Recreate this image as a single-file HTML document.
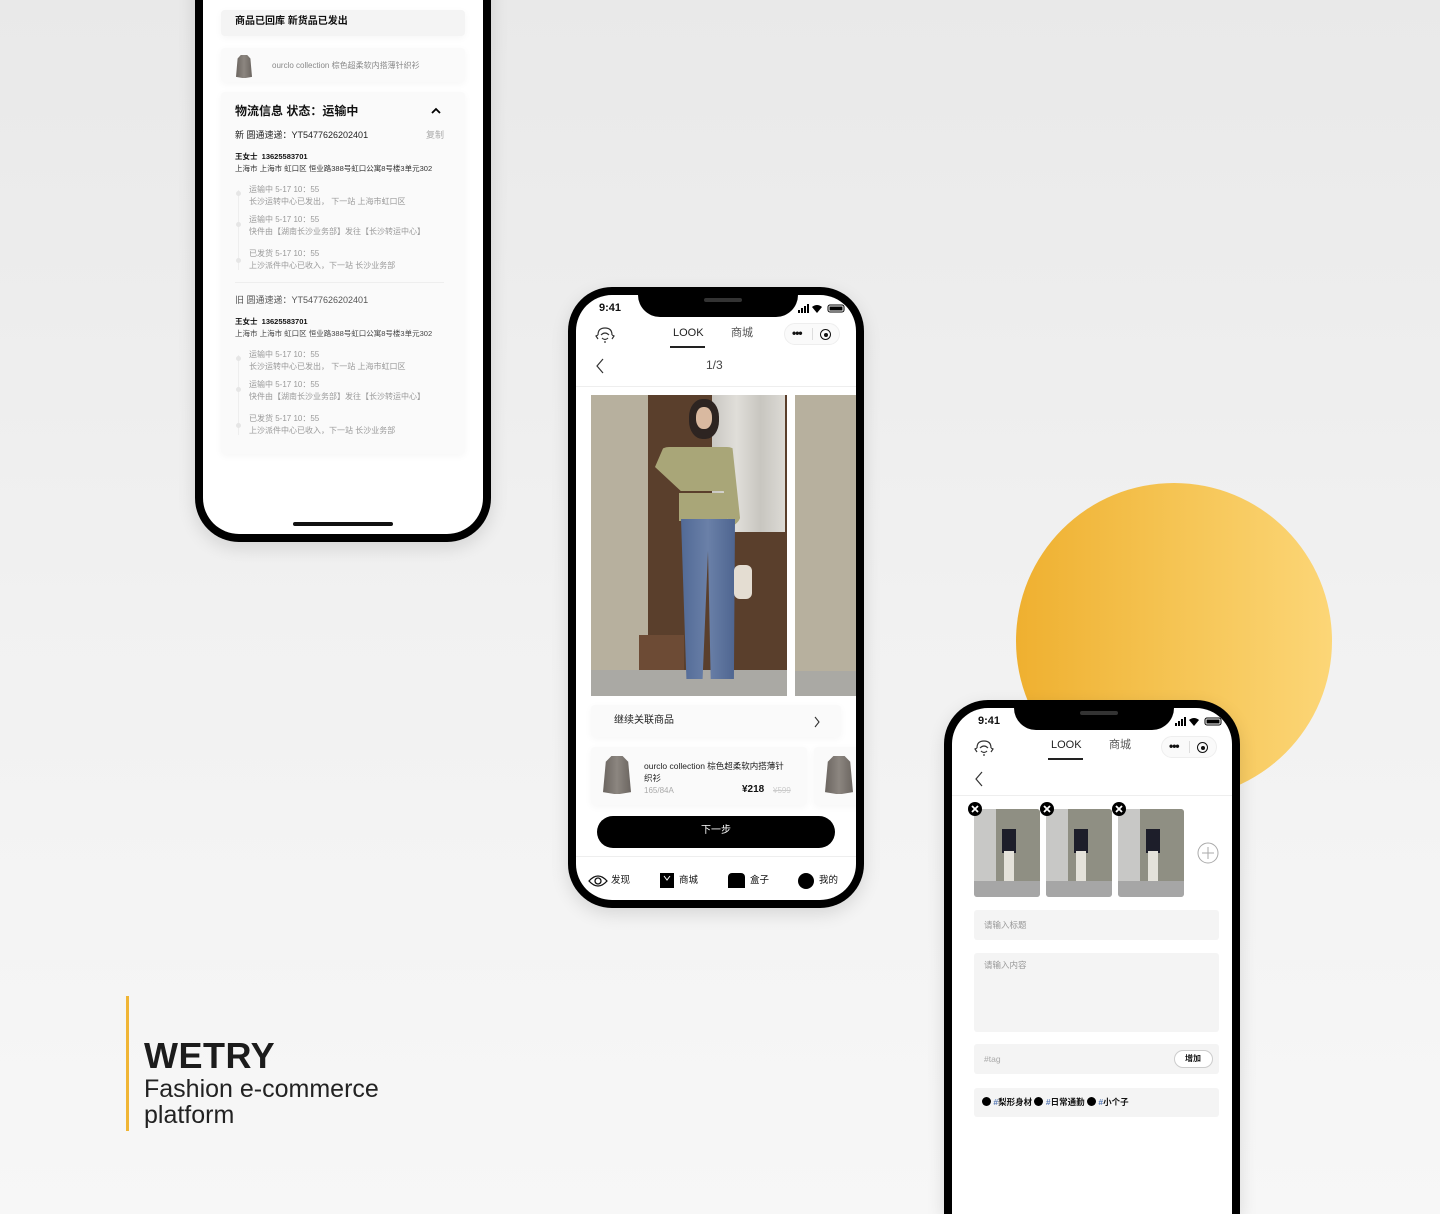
<!DOCTYPE html>
<html style="width:1440px;height:1214px;overflow:hidden"><head><meta charset="utf-8">
<style>
*{margin:0;padding:0;box-sizing:border-box}
body{width:1440px;height:1214px;overflow:hidden;position:relative;background:linear-gradient(180deg,#e9e9e9 0%,#f1f1f1 50%,#f7f7f7 100%);font-family:"Liberation Sans","Noto Sans CJK SC",sans-serif;color:#111}
.a{position:absolute}
.phone{position:absolute;background:#000;border-radius:44px;box-shadow:0 6px 18px rgba(0,0,0,.12)}
.scr{position:absolute;left:8px;top:8px;right:8px;bottom:8px;background:#fff;border-radius:36px;overflow:hidden}
.card{position:absolute;background:#fafafa;border-radius:4px;box-shadow:0 2px 8px rgba(0,0,0,.04)}
.t{position:absolute;white-space:nowrap;line-height:1.2}
.g{color:#9a9a9a}
.notch{position:absolute;background:#000;border-radius:0 0 22px 22px}
.coat{position:absolute;width:22px;height:30px;background:linear-gradient(90deg,#6b6560,#8c8680 50%,#6b6560);clip-path:polygon(30% 0,70% 0,90% 15%,100% 95%,60% 100%,40% 100%,0 95%,10% 15%)}
.dot{position:absolute;width:5px;height:5px;border-radius:50%;background:#e6e6e6}
</style></head><body>

<div class="a" style="left:1016px;top:483px;width:316px;height:316px;border-radius:50%;background:linear-gradient(90deg,#efb030 0%,#f5c453 50%,#fcd677 100%)"></div>

<!-- Phone 1 -->
<div class="phone" style="left:195px;top:-60px;width:296px;height:602px"></div>
<div class="a" style="left:203px;top:0;width:280px;height:534px;overflow:hidden;border-radius:0 0 36px 36px;background:#fff">
 <div class="card" style="left:18px;top:10px;width:244px;height:26px;background:#f4f4f4"></div>
 <div class="t" style="left:32px;top:16px;font-size:10px;font-weight:bold">商品已回库 新货品已发出</div>
 <div class="card" style="left:18px;top:48px;width:244px;height:34px"></div>
 <div class="coat" style="left:33px;top:55px;width:16px;height:23px"></div>
 <div class="t g" style="left:69px;top:61px;font-size:8px;color:#888">ourclo collection 棕色超柔软内搭薄针织衫</div>
 <div class="card" style="left:18px;top:92px;width:244px;height:362px"></div>
 <div class="t" style="left:32px;top:104px;font-size:12px;font-weight:bold">物流信息 状态：运输中</div>
 <svg class="a" style="left:227px;top:106px" width="12" height="10"><path d="M2 7 L6 3 L10 7" stroke="#000" stroke-width="1.8" fill="none"/></svg>
 <div class="t" style="left:32px;top:130px;font-size:9px;color:#222">新 圆通速递：YT5477626202401</div>
 <div class="t g" style="left:223px;top:130px;font-size:9px;color:#aaa">复制</div>
 <div class="t" style="left:32px;top:152px;font-size:7.5px;font-weight:bold">王女士&nbsp;&nbsp;13625583701</div>
 <div class="t" style="left:32px;top:164px;font-size:7.5px;color:#333">上海市 上海市 虹口区 恒业路388号虹口公寓8号楼3单元302</div>
 <div class="a" style="left:35px;top:190px;width:1px;height:80px;background:#eee"></div>
 <div class="dot" style="left:33px;top:191px"></div><div class="dot" style="left:33px;top:222px"></div><div class="dot" style="left:33px;top:258px"></div>
 <div class="t g" style="left:46px;top:184px;font-size:8px;line-height:12px">运输中 5-17 10：55<br>长沙运转中心已发出， 下一站 上海市虹口区</div>
 <div class="t g" style="left:46px;top:214px;font-size:8px;line-height:12px">运输中 5-17 10：55<br>快件由【湖南长沙业务部】发往【长沙转运中心】</div>
 <div class="t g" style="left:46px;top:248px;font-size:8px;line-height:12px">已发货 5-17 10：55<br>上沙派件中心已收入，下一站 长沙业务部</div>
 <div class="a" style="left:32px;top:282px;width:209px;height:1px;background:#eee"></div>
 <div class="t" style="left:32px;top:295px;font-size:9px;color:#555">旧 圆通速递：YT5477626202401</div>
 <div class="t" style="left:32px;top:317px;font-size:7.5px;font-weight:bold">王女士&nbsp;&nbsp;13625583701</div>
 <div class="t" style="left:32px;top:329px;font-size:7.5px;color:#444">上海市 上海市 虹口区 恒业路388号虹口公寓8号楼3单元302</div>
 <div class="a" style="left:35px;top:355px;width:1px;height:80px;background:#eee"></div>
 <div class="dot" style="left:33px;top:356px"></div><div class="dot" style="left:33px;top:387px"></div><div class="dot" style="left:33px;top:423px"></div>
 <div class="t g" style="left:46px;top:349px;font-size:8px;line-height:12px">运输中 5-17 10：55<br>长沙运转中心已发出， 下一站 上海市虹口区</div>
 <div class="t g" style="left:46px;top:379px;font-size:8px;line-height:12px">运输中 5-17 10：55<br>快件由【湖南长沙业务部】发往【长沙转运中心】</div>
 <div class="t g" style="left:46px;top:413px;font-size:8px;line-height:12px">已发货 5-17 10：55<br>上沙派件中心已收入，下一站 长沙业务部</div>
 <div class="a" style="left:90px;top:522px;width:100px;height:4px;border-radius:2px;background:#111"></div>
</div>

<!-- Phone 2 -->
<div class="phone" style="left:568px;top:287px;width:296px;height:621px">
 <div class="scr">
  <div class="notch" style="left:62px;top:-2px;width:160px;height:24px"></div>
  <div class="a" style="left:128px;top:3px;width:38px;height:4px;border-radius:2px;background:#333"></div>
  <div class="t" style="left:23px;top:7px;font-size:11px;font-weight:bold">9:41</div>
  <svg class="a" style="left:222px;top:9px" width="50" height="10"><rect x="0" y="6" width="2" height="3" fill="#000"/><rect x="3" y="4" width="2" height="5"/><rect x="6" y="2" width="2" height="7"/><rect x="9" y="0" width="2" height="9"/><path d="M14 3 Q19 -1 24 3 L19 9Z" fill="#000"/><rect x="30" y="1" width="16" height="7" rx="2" fill="none" stroke="#000"/><rect x="31.5" y="2.5" width="13" height="4" fill="#000"/></svg>
  <svg class="a" style="left:19px;top:31px" width="20" height="18"><path d="M3 9 Q3 2 10 2 Q17 2 17 9 M3 9 L1 10 L3 13 M17 9 L19 10 L17 13 M6 9 Q10 5 14 9 M7 12 Q10 15 13 12 M10 15 L10 17" stroke="#333" stroke-width="1.2" fill="none"/></svg>
  <div class="t" style="left:97px;top:32px;font-size:11px;color:#222">LOOK</div>
  <div class="a" style="left:94px;top:51px;width:35px;height:2px;background:#222"></div>
  <div class="t" style="left:155px;top:32px;font-size:11px;color:#555">商城</div>
  <div class="a" style="left:208px;top:28px;width:56px;height:22px;border-radius:11px;border:1px solid #eee;background:#fafafa"></div>
  <div class="t" style="left:216px;top:31px;font-size:12px;font-weight:bold;letter-spacing:-1px">•••</div>
  <div class="a" style="left:236px;top:33px;width:1px;height:12px;background:#ddd"></div>
  <div class="a" style="left:244px;top:34px;width:11px;height:11px;border-radius:50%;border:1.5px solid #111"></div>
  <div class="a" style="left:247.5px;top:37.5px;width:4px;height:4px;border-radius:50%;background:#111"></div>
  <svg class="a" style="left:19px;top:63px" width="10" height="16"><path d="M8 1 L2 8 L8 15" stroke="#333" stroke-width="1.2" fill="none"/></svg>
  <div class="t" style="left:130px;top:63px;font-size:12px;color:#444">1/3</div>
  <div class="a" style="left:0;top:91px;width:280px;height:1px;background:#eee"></div>
  <div class="a" style="left:15px;top:100px;width:196px;height:301px;background:#b7b09e;overflow:hidden">
   <div class="a" style="left:57px;top:0;width:139px;height:280px;background:#5a3f2c"></div>
   <div class="a" style="left:121px;top:0;width:73px;height:137px;background:linear-gradient(90deg,#c9c7c2,#e0ded9,#c8c6c0,#dcdad5)"></div>
   <div class="a" style="left:48px;top:240px;width:45px;height:45px;background:#6d4b35"></div>
   <div class="a" style="left:0;top:275px;width:196px;height:26px;background:#aaa9a4"></div>
   <div class="a" style="left:98px;top:4px;width:30px;height:40px;border-radius:45%;background:#2d2421"></div>
   <div class="a" style="left:105px;top:12px;width:16px;height:22px;border-radius:45%;background:#d9b9a0"></div>
   <div class="a" style="left:64px;top:52px;width:86px;height:80px;border-radius:14px;background:#a9a678;clip-path:polygon(10% 0,90% 0,100% 100%,85% 100%,80% 55%,30% 55%,0 25%)"></div>
   <div class="a" style="left:88px;top:98px;width:48px;height:28px;background:#a9a678"></div>
   <div class="a" style="left:90px;top:124px;width:54px;height:160px;background:linear-gradient(90deg,#526a96,#6a80a8,#4e6590);clip-path:polygon(0 0,100% 0,98% 100%,55% 100%,50% 20%,40% 100%,10% 100%)"></div>
   <div class="a" style="left:143px;top:170px;width:18px;height:34px;border-radius:6px;background:#e4ddd2"></div>
  </div>
  <div class="a" style="left:219px;top:100px;width:61px;height:301px;background:#b7b09e"></div>
  <div class="a" style="left:219px;top:376px;width:61px;height:25px;background:#aaa9a4"></div>
  <div class="card" style="left:15px;top:410px;width:250px;height:32px"></div>
  <div class="t" style="left:38px;top:420px;font-size:10px;color:#222">继续关联商品</div>
  <svg class="a" style="left:237px;top:421px" width="8" height="12"><path d="M2 1 L6 6 L2 11" stroke="#333" stroke-width="1.1" fill="none"/></svg>
  <div class="card" style="left:15px;top:452px;width:216px;height:58px;background:#fafafa"></div>
  <div class="coat" style="left:27px;top:461px;width:28px;height:38px"></div>
  <div class="t" style="left:68px;top:465px;font-size:8.5px;line-height:12px;color:#222">ourclo collection 棕色超柔软内搭薄针<br>织衫</div>
  <div class="t" style="left:68px;top:491px;font-size:8px;color:#aaa">165/84A</div>
  <div class="t" style="left:166px;top:489px;font-size:10px;font-weight:bold">¥218</div>
  <div class="t" style="left:197px;top:491px;font-size:8px;color:#ccc;text-decoration:line-through">¥599</div>
  <div class="card" style="left:238px;top:452px;width:50px;height:58px"></div>
  <div class="coat" style="left:249px;top:461px;width:28px;height:38px"></div>
  <div class="a" style="left:21px;top:521px;width:238px;height:32px;border-radius:16px;background:#000"></div>
  <div class="t" style="left:125px;top:530px;font-size:10px;color:#fff">下一步</div>
  <div class="a" style="left:0;top:561px;width:280px;height:1px;background:#eee"></div>
  <svg class="a" style="left:12px;top:579px" width="20" height="14"><path d="M1 7 Q10 -3 19 7 Q10 17 1 7Z" stroke="#111" stroke-width="1.3" fill="none"/><circle cx="10" cy="7" r="3" stroke="#111" stroke-width="1.3" fill="none"/></svg>
  <div class="t" style="left:35px;top:580px;font-size:9.5px">发现</div>
  <div class="a" style="left:84px;top:578px;width:14px;height:15px;background:#000"></div>
  <svg class="a" style="left:86px;top:580px" width="10" height="7"><path d="M2 1 L5 5 L8 1" stroke="#fff" stroke-width="1" fill="none"/></svg>
  <div class="t" style="left:103px;top:580px;font-size:9.5px">商城</div>
  <div class="a" style="left:152px;top:578px;width:17px;height:15px;background:#000;border-radius:4px 4px 0 0"></div>
  <div class="t" style="left:174px;top:580px;font-size:9.5px">盒子</div>
  <div class="a" style="left:222px;top:578px;width:16px;height:16px;border-radius:50%;background:#000"></div>
  <div class="t" style="left:243px;top:580px;font-size:9.5px">我的</div>
 </div>
</div>

<!-- Phone 3 -->
<div class="phone" style="left:944px;top:700px;width:296px;height:514px;border-radius:44px 44px 0 0">
 <div class="scr" style="bottom:0;border-radius:36px 36px 0 0;background:#fff">
  <div class="notch" style="left:62px;top:-2px;width:160px;height:24px"></div>
  <div class="a" style="left:128px;top:3px;width:38px;height:4px;border-radius:2px;background:#333"></div>
  <div class="t" style="left:26px;top:7px;font-size:11px;font-weight:bold">9:41</div>
  <svg class="a" style="left:223px;top:9px" width="50" height="10"><rect x="0" y="6" width="2" height="3" fill="#000"/><rect x="3" y="4" width="2" height="5"/><rect x="6" y="2" width="2" height="7"/><rect x="9" y="0" width="2" height="9"/><path d="M14 3 Q19 -1 24 3 L19 9Z" fill="#000"/><rect x="30" y="1" width="16" height="7" rx="2" fill="none" stroke="#000"/><rect x="31.5" y="2.5" width="13" height="4" fill="#000"/></svg>
  <svg class="a" style="left:22px;top:31px" width="20" height="18"><path d="M3 9 Q3 2 10 2 Q17 2 17 9 M3 9 L1 10 L3 13 M17 9 L19 10 L17 13 M6 9 Q10 5 14 9 M7 12 Q10 15 13 12 M10 15 L10 17" stroke="#333" stroke-width="1.2" fill="none"/></svg>
  <div class="t" style="left:99px;top:31px;font-size:11px;color:#222">LOOK</div>
  <div class="a" style="left:96px;top:50px;width:35px;height:2px;background:#222"></div>
  <div class="t" style="left:157px;top:31px;font-size:11px;color:#555">商城</div>
  <div class="a" style="left:209px;top:28px;width:56px;height:22px;border-radius:11px;border:1px solid #eee;background:#fafafa"></div>
  <div class="t" style="left:217px;top:31px;font-size:12px;font-weight:bold;letter-spacing:-1px">•••</div>
  <div class="a" style="left:237px;top:33px;width:1px;height:12px;background:#ddd"></div>
  <div class="a" style="left:245px;top:34px;width:11px;height:11px;border-radius:50%;border:1.5px solid #111"></div>
  <div class="a" style="left:248.5px;top:37.5px;width:4px;height:4px;border-radius:50%;background:#111"></div>
  <svg class="a" style="left:22px;top:63px" width="10" height="16"><path d="M8 1 L2 8 L8 15" stroke="#333" stroke-width="1.2" fill="none"/></svg>
  <div class="a" style="left:0;top:87px;width:280px;height:1px;background:#eee"></div>
  <div class="a" style="left:22px;top:101px;width:66px;height:88px;border-radius:3px;overflow:hidden;background:#c8c8c6"><div class="a" style="left:22px;top:0;width:44px;height:72px;background:#8f8f83"></div><div class="a" style="left:28px;top:20px;width:14px;height:24px;background:#1d1e2a"></div><div class="a" style="left:30px;top:42px;width:10px;height:36px;background:#e4e2da"></div><div class="a" style="left:0;top:72px;width:66px;height:16px;background:#a6a6a6"></div></div>
  <div class="a" style="left:94px;top:101px;width:66px;height:88px;border-radius:3px;overflow:hidden;background:#c8c8c6"><div class="a" style="left:22px;top:0;width:44px;height:72px;background:#8f8f83"></div><div class="a" style="left:28px;top:20px;width:14px;height:24px;background:#1d1e2a"></div><div class="a" style="left:30px;top:42px;width:10px;height:36px;background:#e4e2da"></div><div class="a" style="left:0;top:72px;width:66px;height:16px;background:#a6a6a6"></div></div>
  <div class="a" style="left:166px;top:101px;width:66px;height:88px;border-radius:3px;overflow:hidden;background:#c8c8c6"><div class="a" style="left:22px;top:0;width:44px;height:72px;background:#8f8f83"></div><div class="a" style="left:28px;top:20px;width:14px;height:24px;background:#1d1e2a"></div><div class="a" style="left:30px;top:42px;width:10px;height:36px;background:#e4e2da"></div><div class="a" style="left:0;top:72px;width:66px;height:16px;background:#a6a6a6"></div></div>
  <svg class="a" style="left:16px;top:94px" width="232" height="16"><g><circle cx="7" cy="7" r="7" fill="#000"/><path d="M4 4 L10 10 M10 4 L4 10" stroke="#fff" stroke-width="1.8"/></g><g transform="translate(72,0)"><circle cx="7" cy="7" r="7" fill="#000"/><path d="M4 4 L10 10 M10 4 L4 10" stroke="#fff" stroke-width="1.8"/></g><g transform="translate(144,0)"><circle cx="7" cy="7" r="7" fill="#000"/><path d="M4 4 L10 10 M10 4 L4 10" stroke="#fff" stroke-width="1.8"/></g></svg>
  <svg class="a" style="left:245px;top:134px" width="22" height="22"><circle cx="11" cy="11" r="10" stroke="#aaa" fill="none"/><path d="M11 5 V17 M5 11 H17" stroke="#aaa"/></svg>
  <div class="a" style="left:22px;top:202px;width:245px;height:30px;background:#f4f4f4;border-radius:3px"></div>
  <div class="t g" style="left:32px;top:212px;font-size:8.5px;color:#999">请输入标题</div>
  <div class="a" style="left:22px;top:245px;width:245px;height:79px;background:#f4f4f4;border-radius:3px"></div>
  <div class="t g" style="left:32px;top:252px;font-size:8.5px;color:#999">请输入内容</div>
  <div class="a" style="left:22px;top:336px;width:245px;height:30px;background:#f4f4f4;border-radius:3px"></div>
  <div class="t g" style="left:32px;top:346px;font-size:8.5px;color:#aaa">#tag</div>
  <div class="a" style="left:222px;top:342px;width:39px;height:18px;border-radius:9px;border:1px solid #ccc;background:#fff"></div>
  <div class="t" style="left:233px;top:346px;font-size:8px;font-weight:bold">增加</div>
  <div class="a" style="left:22px;top:380px;width:245px;height:29px;background:#f4f4f4;border-radius:3px"></div>
  <div class="t" style="left:30px;top:389px;font-size:8.5px;font-weight:bold"><span style="display:inline-block;width:9px;height:9px;border-radius:50%;background:#000;vertical-align:-1px"></span> <span style="color:#5a7bb5">#</span>梨形身材 <span style="display:inline-block;width:9px;height:9px;border-radius:50%;background:#000;vertical-align:-1px"></span> <span style="color:#5a7bb5">#</span>日常通勤 <span style="display:inline-block;width:9px;height:9px;border-radius:50%;background:#000;vertical-align:-1px"></span> <span style="color:#5a7bb5">#</span>小个子</div>
 </div>
</div>

<div class="a" style="left:126px;top:996px;width:3px;height:135px;background:#f0b535"></div>
<div class="t" style="left:144px;top:1036px;font-size:36px;font-weight:bold;color:#1c1c1c;letter-spacing:0.5px;line-height:40px">WETRY</div>
<div class="t" style="left:144px;top:1076px;font-size:25px;line-height:26px;color:#222">Fashion e-commerce<br>platform</div>

</body></html>
